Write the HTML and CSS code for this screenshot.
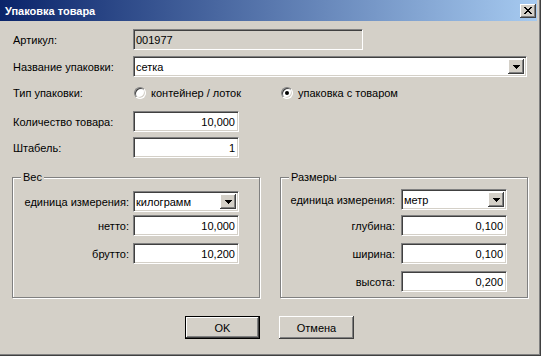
FILE: index.html
```html
<!DOCTYPE html>
<html lang="ru">
<head>
    <meta charset="UTF-8">
    <title>Упаковка товара</title>
    <link rel="stylesheet" href="styles.css">
</head>
<body>
    <div class="window">
        <div class="titlebar">
            <span class="title">Упаковка товара</span>
            <button class="close-btn">
                <svg width="8" height="7" viewBox="0 0 8 7" shape-rendering="crispEdges">
                    <path d="M0 0h2v1h-2zM6 0h2v1h-2zM1 1h2v1h-2zM5 1h2v1h-2zM2 2h4v1h-4zM3 3h2v1h-2zM2 4h4v1h-4zM1 5h2v1h-2zM5 5h2v1h-2zM0 6h2v1h-2zM6 6h2v1h-2z" fill="#000"/>
                </svg>
            </button>
        </div>

        <div class="client">
            <div class="row row-article">
                <span class="label">Артикул:</span>
                <div class="edit edit-readonly w-article">001977</div>
            </div>

            <div class="row row-name">
                <span class="label">Название упаковки:</span>
                <div class="combo w-name">
                    <span class="combo-text">сетка</span>
                    <span class="combo-btn">
                        <svg width="7" height="4" viewBox="0 0 7 4" shape-rendering="crispEdges"><path d="M0 0h7v1h-1v1h-1v1h-1v1h-1v-1h-1v-1h-1v-1h-1z" fill="#000"/></svg>
                    </span>
                </div>
            </div>

            <div class="row row-type">
                <span class="label">Тип упаковки:</span>
                <span class="radio-item radio-first"><span class="radio"></span>контейнер / лоток</span>
                <span class="radio-item"><span class="radio checked"></span>упаковка с товаром</span>
            </div>

            <div class="row row-qty">
                <span class="label">Количество товара:</span>
                <div class="edit num w-small">10,000</div>
            </div>

            <div class="row row-stack">
                <span class="label">Штабель:</span>
                <div class="edit num w-small">1</div>
            </div>

            <div class="groups">
                <fieldset class="group group-weight">
                    <legend>Вес</legend>
                    <div class="grow">
                        <span>единица измерения:</span>
                        <div class="combo w-small">
                            <span class="combo-text">килограмм</span>
                            <span class="combo-btn">
                                <svg width="7" height="4" viewBox="0 0 7 4" shape-rendering="crispEdges"><path d="M0 0h7v1h-1v1h-1v1h-1v1h-1v-1h-1v-1h-1v-1h-1z" fill="#000"/></svg>
                            </span>
                        </div>
                    </div>
                    <div class="grow grow-first">
                        <span>нетто:</span>
                        <div class="edit num w-small">10,000</div>
                    </div>
                    <div class="grow">
                        <span>брутто:</span>
                        <div class="edit num w-small">10,200</div>
                    </div>
                </fieldset>

                <fieldset class="group group-size">
                    <legend>Размеры</legend>
                    <div class="grow">
                        <span>единица измерения:</span>
                        <div class="combo w-small">
                            <span class="combo-text">метр</span>
                            <span class="combo-btn">
                                <svg width="7" height="4" viewBox="0 0 7 4" shape-rendering="crispEdges"><path d="M0 0h7v1h-1v1h-1v1h-1v1h-1v-1h-1v-1h-1v-1h-1z" fill="#000"/></svg>
                            </span>
                        </div>
                    </div>
                    <div class="grow grow-first">
                        <span>глубина:</span>
                        <div class="edit num w-small">0,100</div>
                    </div>
                    <div class="grow">
                        <span>ширина:</span>
                        <div class="edit num w-small">0,100</div>
                    </div>
                    <div class="grow">
                        <span>высота:</span>
                        <div class="edit num w-small">0,200</div>
                    </div>
                </fieldset>
            </div>

            <div class="buttons">
                <button class="btn btn-default">OK</button>
                <button class="btn">Отмена</button>
            </div>
        </div>
    </div>
</body>
</html>
```

FILE: styles.css
```css
body {
    margin: 0;
    background: #d4d0c8;
    font-family: "Liberation Sans", Arial, sans-serif;
    font-size: 11px;
    color: #000;
}
.window {
    width: 541px;
    height: 356px;
    box-sizing: border-box;
    background: #d4d0c8;
    border-right: 1px solid #404040;
    border-bottom: 1px solid #404040;
    box-shadow: inset -1px -1px 0 #808080;
    padding: 0 3px 3px 0;
}

/* title bar */
.titlebar {
    height: 21px;
    display: flex;
    align-items: center;
    justify-content: space-between;
    padding: 0 1px 0 5px;
    background: linear-gradient(to right, #0a246a, #a6caf0);
}
.title {
    color: #fff;
    font-weight: bold;
    font-size: 11px;
}
.close-btn {
    width: 16px;
    height: 14px;
    padding: 0;
    border: none;
    background: #d4d0c8;
    display: flex;
    align-items: center;
    justify-content: center;
    box-shadow: inset -1px -1px 0 #404040, inset 1px 1px 0 #fff, inset -2px -2px 0 #808080;
}

/* form rows */
.client {
    display: flex;
    flex-direction: column;
}
.row {
    display: flex;
    align-items: center;
    padding-left: 13px;
}
.label {
    width: 120px;
    flex: none;
}
.row-article { margin-top: 8px; }
.row-name { margin-top: 6px; }
.row-type { margin-top: 8px; height: 16px; }
.row-qty { margin-top: 10px; }
.row-stack { margin-top: 5px; }

.edit {
    height: 21px;
    box-sizing: border-box;
    border: 1px solid;
    border-color: #808080 #fff #fff #808080;
    box-shadow: inset 1px 1px 0 #404040, inset -1px -1px 0 #d4d0c8;
    background: #fff;
    padding: 0 3px 0 2px;
    display: flex;
    align-items: center;
}
.edit-readonly {
    background: #d4d0c8;
}
.num {
    justify-content: flex-end;
}
.w-article { width: 230px; }
.w-name { width: 394px; }
.w-small { width: 106px; }

/* combo box */
.combo {
    height: 21px;
    box-sizing: border-box;
    border: 1px solid;
    border-color: #808080 #fff #fff #808080;
    box-shadow: inset 1px 1px 0 #404040, inset -1px -1px 0 #d4d0c8;
    background: #fff;
    padding: 2px 2px 2px 2px;
    display: flex;
    align-items: stretch;
}
.combo-text {
    flex: 1;
    display: flex;
    align-items: center;
}
.combo-btn {
    width: 16px;
    background: #d4d0c8;
    display: flex;
    align-items: center;
    justify-content: center;
    box-shadow: inset -1px -1px 0 #404040, inset 1px 1px 0 #fff, inset -2px -2px 0 #808080;
}

/* radio buttons */
.radio-item {
    display: flex;
    align-items: center;
}
.radio-first {
    width: 147px;
    margin-left: 1px;
}
.radio {
    width: 12px;
    height: 12px;
    box-sizing: border-box;
    border-radius: 50%;
    border: 1px solid;
    border-color: #808080 #fff #fff #808080;
    box-shadow: inset 1px 1px 0 #404040, inset -1px -1px 0 #d4d0c8;
    background: #fff;
    margin-right: 5px;
    display: flex;
    align-items: center;
    justify-content: center;
}
.radio.checked::after {
    content: '';
    width: 4px;
    height: 4px;
    border-radius: 50%;
    background: #000;
}

/* group boxes */
.groups {
    display: flex;
    gap: 20px;
    padding-left: 12px;
    margin-top: 13px;
}
.group {
    width: 248px;
    height: 127px;
    box-sizing: border-box;
    margin: 0;
    min-width: 0;
    padding: 7px 20px 0 0;
    border: 1px solid #808080;
    box-shadow: 1px 1px 0 #fff, inset 1px 1px 0 #fff;
}
.group legend {
    margin-left: 8px;
    padding: 0 2px;
    line-height: 13px;
    background: #d4d0c8;
}
.group-size {
    padding-top: 5px;
}
.grow {
    display: flex;
    justify-content: flex-end;
    align-items: center;
    gap: 4px;
    margin-top: 7px;
}
.grow:first-of-type {
    margin-top: 0;
}
.group-weight .grow-first { margin-top: 3px; }
.group-size .grow-first { margin-top: 5px; }
.group-size .grow { gap: 6px; }

/* dialog buttons */
.buttons {
    display: flex;
    justify-content: center;
    gap: 19px;
    margin-top: 18px;
    padding-left: 2px;
}
.btn {
    width: 75px;
    height: 23px;
    padding: 0;
    border: none;
    background: #d4d0c8;
    font: inherit;
    color: #000;
    box-shadow: inset -1px -1px 0 #404040, inset 1px 1px 0 #fff, inset -2px -2px 0 #808080;
}
.btn-default {
    border: 1px solid #000;
}
```
